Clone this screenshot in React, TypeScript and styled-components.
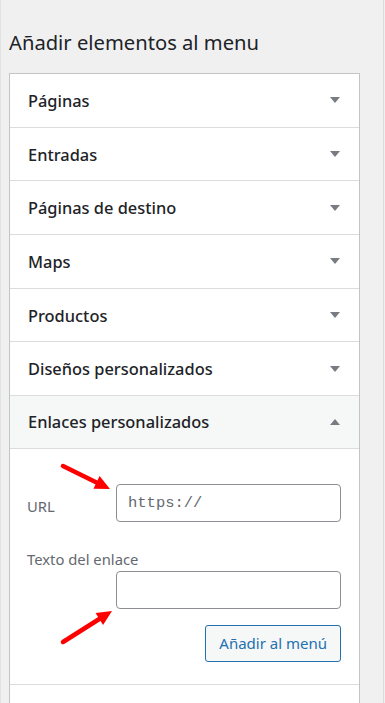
import styled, { createGlobalStyle } from 'styled-components';

const GlobalStyle = createGlobalStyle`
  html, body {
    margin: 0;
    padding: 0;
    background: #f0f0f1;
  }
  * { box-sizing: border-box; }
`;

const Page = styled.div`
  position: relative;
  width: 385px;
  height: 703px;
  overflow: hidden;
  background: #f0f0f1;
  border-left: 1px solid #e2e2e4;
  font-family: "Noto Sans", "Open Sans", sans-serif;
  color: #1d2327;
`;

const Column = styled.div`
  width: 383px;
  height: 100%;
  padding: 27px 0 0 8px;
  border-right: 1px solid #dcdcde;
`;

const Title = styled.h2`
  margin: 0 0 16px;
  font-size: 20.2px;
  font-weight: 400;
  line-height: 30px;
  color: #1d2327;
`;

const Panel = styled.div`
  width: 351px;
  background: #fff;
  border: 1px solid #c3c4c7;
  border-bottom: none;
`;

const Section = styled.div`
  border-bottom: 1px solid #dcdcde;
`;

const SectionHeader = styled.div<{ $open?: boolean }>`
  display: flex;
  align-items: center;
  justify-content: space-between;
  height: 52.7px;
  padding: 0 19px 0 18px;
  background: ${p => (p.$open ? '#f6f7f7' : '#fff')};
  border-bottom: ${p => (p.$open ? '1px solid #dcdcde' : 'none')};
  font-size: 16.4px;
  font-weight: 500;
  color: #1d2327;
`;

const Caret = styled.span<{ $up?: boolean }>`
  width: 0;
  height: 0;
  border-left: 5px solid transparent;
  border-right: 5px solid transparent;
  ${p =>
    p.$up
      ? 'border-bottom: 6px solid #787c82;'
      : 'border-top: 6px solid #787c82;'}
`;

const Body = styled.div`
  padding: 35px 17px 22px 17px;
`;

const Row = styled.div`
  display: flex;
  align-items: center;
`;

const Label = styled.label<{ $width?: number }>`
  font-size: 14.8px;
  color: #646970;
  width: ${p => (p.$width ? `${p.$width}px` : 'auto')};
  padding-top: ${p => (p.$width ? '6px' : '0')};
  display: block;
`;

const Input = styled.input<{ $indent?: boolean }>`
  display: block;
  width: 225px;
  height: 38px;
  margin-left: ${p => (p.$indent ? '89px' : '0')};
  padding: 0 11px;
  border: 1px solid #8c8f94;
  border-radius: 4px;
  background: #fff;
  font-family: "Liberation Mono", monospace;
  font-size: 15.5px;
  color: #2c3338;
  outline: none;
  &::placeholder {
    color: #646970;
  }
`;

const TextField = styled.div`
  margin-top: 27px;
  display: flex;
  flex-direction: column;
  gap: 2px;
`;

const Actions = styled.div`
  display: flex;
  justify-content: flex-end;
  margin-top: 16px;
  padding-right: 1px;
`;

const Button = styled.button`
  height: 37px;
  padding: 0 13px;
  border: 1px solid #2271b1;
  border-radius: 3px;
  background: #f6f7f7;
  color: #2271b1;
  font-family: "Noto Sans", "Open Sans", sans-serif;
  font-size: 15px;
`;

const ArrowLayer = styled.svg`
  position: absolute;
  left: 0;
  top: 0;
  pointer-events: none;
`;

const sections = [
  'Páginas',
  'Entradas',
  'Páginas de destino',
  'Maps',
  'Productos',
  'Diseños personalizados',
];

const Arrow = ({ x1, y1, x2, y2 }: { x1: number; y1: number; x2: number; y2: number }) => {
  const a = Math.atan2(y2 - y1, x2 - x1);
  const len = 15;
  const w = 7;
  const bx = x2 - Math.cos(a) * len;
  const by = y2 - Math.sin(a) * len;
  const px = -Math.sin(a) * w;
  const py = Math.cos(a) * w;
  return (
    <g>
      <line x1={x1} y1={y1} x2={bx} y2={by} stroke="#f00" strokeWidth={4.5} strokeLinecap="round" />
      <polygon points={`${x2},${y2} ${bx + px},${by + py} ${bx - px},${by - py}`} fill="#f00" />
    </g>
  );
};

export default function App() {
  return (
    <Page>
      <GlobalStyle />
      <Column>
        <Title>Añadir elementos al menu</Title>
        <Panel>
          {sections.map(s => (
            <Section key={s}>
              <SectionHeader>
                {s}
                <Caret />
              </SectionHeader>
            </Section>
          ))}
          <Section>
            <SectionHeader $open>
              Enlaces personalizados
              <Caret $up />
            </SectionHeader>
            <Body>
              <Row>
                <Label $width={89}>URL</Label>
                <Input placeholder="https://" />
              </Row>
              <TextField>
                <Label>Texto del enlace</Label>
                <Input $indent />
              </TextField>
              <Actions>
                <Button>Añadir al menú</Button>
              </Actions>
            </Body>
          </Section>
          <Section>
            <SectionHeader>&nbsp;</SectionHeader>
          </Section>
        </Panel>
      </Column>
      <ArrowLayer width={385} height={703}>
        <Arrow x1={62} y1={466} x2={109} y2={489} />
        <Arrow x1={62} y1={642} x2={111} y2={611} />
      </ArrowLayer>
    </Page>
  );
}
